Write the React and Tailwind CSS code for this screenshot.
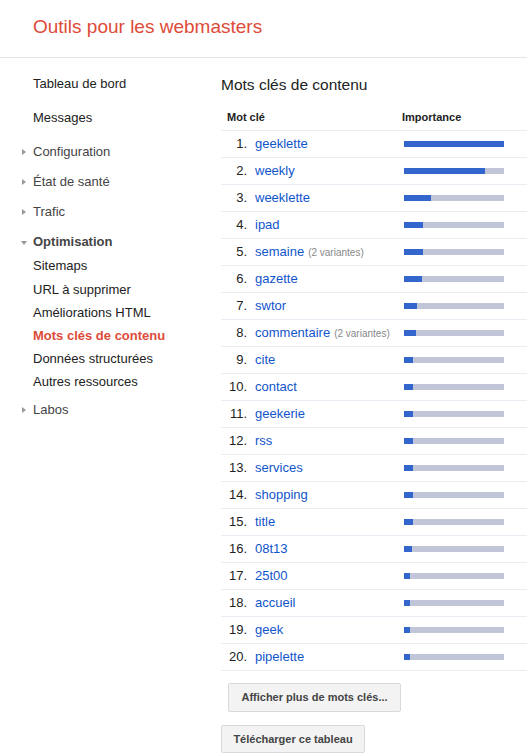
import React from "react";

const rows = [
  { k: "geeklette", w: 100 },
  { k: "weekly", w: 81 },
  { k: "weeklette", w: 27 },
  { k: "ipad", w: 19 },
  { k: "semaine", w: 19, v: "(2 variantes)" },
  { k: "gazette", w: 18 },
  { k: "swtor", w: 13 },
  { k: "commentaire", w: 12, v: "(2 variantes)" },
  { k: "cite", w: 9 },
  { k: "contact", w: 9 },
  { k: "geekerie", w: 9 },
  { k: "rss", w: 9 },
  { k: "services", w: 9 },
  { k: "shopping", w: 9 },
  { k: "title", w: 9 },
  { k: "08t13", w: 8 },
  { k: "25t00", w: 6 },
  { k: "accueil", w: 6 },
  { k: "geek", w: 6 },
  { k: "pipelette", w: 6 },
];

const RightTri = () => (
  <span className="absolute left-[22px] top-1/2 -translate-y-1/2 w-0 h-0 border-y-[3.5px] border-y-transparent border-l-[4px] border-l-[#999]" />
);
const DownTri = () => (
  <span className="absolute left-[21px] top-1/2 -translate-y-[1px] w-0 h-0 border-x-[3.5px] border-x-transparent border-t-[4px] border-t-[#999]" />
);

function NavItem({ h, children, tri, className = "" }) {
  return (
    <div className={`relative flex items-center pl-[33px] ${h} ${className}`}>
      {tri === "right" && <RightTri />}
      {tri === "down" && <DownTri />}
      {children}
    </div>
  );
}

export default function App() {
  return (
    <div className="w-[527px] min-h-[756px] bg-white font-['Liberation_Sans',Arial,sans-serif] text-[13px] text-[#222]">
      <div className="h-[58px] border-b border-[#e5e5e5] pl-[33px] pt-[15px]">
        <div className="text-[19px] leading-[23px] text-[#dd4b39]">Outils pour les webmasters</div>
      </div>

      <div className="flex">
        {/* sidebar */}
        <div className="w-[221px] shrink-0 pt-[9px]">
          <NavItem h="h-[34px]">Tableau de bord</NavItem>
          <NavItem h="h-[34px]">Messages</NavItem>
          <NavItem h="h-[30px]" tri="right" className="mt-[2px] text-[#444]">Configuration</NavItem>
          <NavItem h="h-[30px]" tri="right" className="text-[#444]">État de santé</NavItem>
          <NavItem h="h-[30px]" tri="right" className="text-[#444]">Trafic</NavItem>
          <NavItem h="h-[24px]" tri="down" className="mt-[3px] font-bold text-[#444]">Optimisation</NavItem>
          <NavItem h="h-[24px]">Sitemaps</NavItem>
          <NavItem h="h-[23px]">URL à supprimer</NavItem>
          <NavItem h="h-[23px]">Améliorations HTML</NavItem>
          <NavItem h="h-[23px]" className="font-bold text-[#dd4b39]">Mots clés de contenu</NavItem>
          <NavItem h="h-[23px]">Données structurées</NavItem>
          <NavItem h="h-[23px]">Autres ressources</NavItem>
          <NavItem h="h-[30px]" tri="right" className="mt-[2px] text-[#444]">Labos</NavItem>
        </div>

        {/* main */}
        <div className="flex-1 pt-[17px]">
          <div className="text-[15.5px] leading-[20px] text-[#222]">Mots clés de contenu</div>
          <div className="mt-[9px]">
            <div className="flex items-center h-[27px] border-b border-[#ebebf3] text-[11px] font-bold text-[#222]">
              <span className="w-[181px] pl-[6px]">Mot clé</span>
              <span>Importance</span>
            </div>
            {rows.map((r, i) => (
              <div key={r.k} className="flex items-center h-[27px] border-b border-[#ebebf3]">
                <span className="w-[26px] text-right">{i + 1}.</span>
                <span className="w-[157px] pl-[8px] whitespace-nowrap">
                  <span className="text-[#1155cc]">{r.k}</span>
                  {r.v && <span className="ml-[4px] text-[10px] text-[#888]">{r.v}</span>}
                </span>
                <div className="w-[100px] h-[6px] bg-[#c0c6d8]">
                  <div className="h-full bg-[#3366cc]" style={{ width: `${r.w}px` }} />
                </div>
              </div>
            ))}
          </div>
          <button className="mt-[12px] ml-[7px] w-[173px] h-[29px] rounded-[2px] border border-[#d9d9d9] bg-[#f3f3f3] text-[11px] font-bold text-[#444]">
            Afficher plus de mots clés...
          </button>
          <div>
            <button className="mt-[13px] w-[144px] h-[28px] rounded-[2px] border border-[#d9d9d9] bg-[#f3f3f3] text-[11px] font-bold text-[#444]">
              Télécharger ce tableau
            </button>
          </div>
        </div>
      </div>
    </div>
  );
}
